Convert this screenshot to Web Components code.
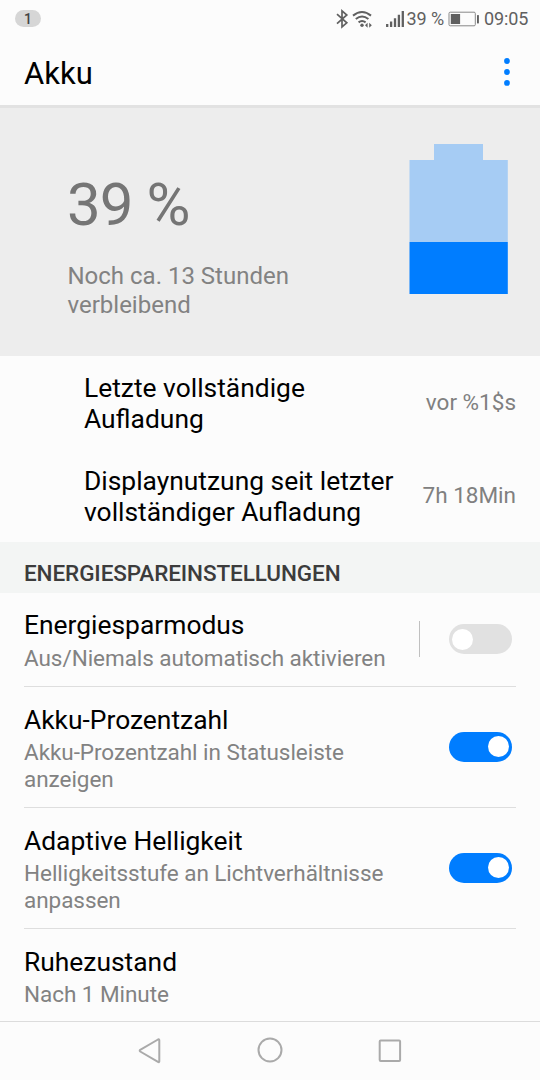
<!DOCTYPE html>
<html lang="de">
<head>
<meta charset="UTF-8">
<title>Akku</title>
<style>
  body {
    margin: 0;
    width: 540px;
    height: 1080px;
    overflow: hidden;
    background: #fcfcfc;
    font-family: Roboto, "Noto Sans", sans-serif;
    color: #000;
  }
</style>
</head>
<body>
<battery-screen></battery-screen>

<script>
// Status bar
class StatusBar extends HTMLElement {
  constructor() {
    super();
    this.attachShadow({ mode: 'open' });
    this.shadowRoot.innerHTML = `
      <style>
        :host {
          display: flex;
          align-items: center;
          box-sizing: border-box;
          height: 37px;
          padding: 0 12px 0 15px;
          font-size: 18px;
          line-height: 21px;
          color: #606060;
        }
        .badge {
          width: 26px;
          height: 17px;
          border-radius: 9px;
          background: #d6d6d6;
          color: #444;
          font-size: 14px;
          font-weight: 500;
          line-height: 18px;
          text-align: center;
          margin-right: auto;
        }
        svg {
          display: block;
          flex: none;
        }
        .percent {
          width: 41.5px;
          letter-spacing: -.1px;
          white-space: nowrap;
        }
        .time {
          width: 44px;
          letter-spacing: -.1px;
          white-space: nowrap;
        }
      </style>
      <span class="badge">1</span>
      <svg width="87" height="24" viewBox="0 0 87 24" fill="none" stroke="#606060" stroke-width="1.7">
        <path d="M17 7.2 L26.8 15.8 L22 20 V3.8 L26.8 8 L17 16.6"/>
        <path d="M33 8.6 Q42 1.4 51 8.6 M35.8 12 Q42 7 48.4 12 M38.6 15.4 Q42 12.8 45.6 15.4" stroke-width="2"/>
        <circle cx="42" cy="18.2" r="1.7" fill="#606060" stroke="none"/>
        <path d="M47.6 15.8 v5 l-2.6 -2.5z M49.2 15.8 v5 l2.6 -2.5z" fill="#606060" stroke="none"/>
        <path d="M67.2 17 V20 M71.1 14.5 V20 M75 11.3 V20 M78.9 7.8 V20 M82.8 4 V20" stroke-width="2.3"/>
      </svg>
      <span class="percent">39 %</span>
      <svg width="36" height="24" viewBox="0 0 36 24">
        <rect x="1" y="5.2" width="26.3" height="13.6" rx="1.2" fill="none" stroke="#888"/>
        <rect x="2.8" y="7" width="9.3" height="10" fill="#606060"/>
        <rect x="29" y="8" width="1.9" height="8.4" rx=".6" fill="#606060"/>
      </svg>
      <span class="time">09:05</span>
    `;
  }
}

// Title bar with overflow menu
class AppBar extends HTMLElement {
  constructor() {
    super();
    this.attachShadow({ mode: 'open' });
    this.shadowRoot.innerHTML = `
      <style>
        :host {
          display: flex;
          align-items: center;
          justify-content: space-between;
          box-sizing: border-box;
          height: 71px;
          padding: 0 24px;
          border-bottom: 3px solid #e2e2e2;
        }
        h1 {
          margin: 5px 0 0;
          font-size: 31px;
          line-height: 36px;
          font-weight: 400;
        }
        svg {
          display: block;
          margin-top: 2px;
        }
      </style>
      <h1><slot></slot></h1>
      <svg width="18" height="32" viewBox="0 0 18 32" fill="#007dff">
        <circle cx="9" cy="5" r="2.9"/>
        <circle cx="9" cy="16" r="2.9"/>
        <circle cx="9" cy="26.9" r="2.9"/>
      </svg>
    `;
  }
}

// Large charge level with remaining time
class BatterySummary extends HTMLElement {
  constructor() {
    super();
    this.attachShadow({ mode: 'open' });
    this.shadowRoot.innerHTML = `
      <style>
        :host {
          display: flex;
          justify-content: space-between;
          box-sizing: border-box;
          height: 247.5px;
          padding: 36px 32px 0 68px;
          background: #ededed;
          color: #757575;
        }
        .level {
          margin: 26px 0 0 -1px;
          font-size: 60px;
          line-height: 70px;
          letter-spacing: -.9px;
        }
        .remaining {
          width: 250px;
          margin: 22px 0 0 -.5px;
          font-size: 24px;
          line-height: 28.6px;
          color: #828282;
        }
        svg {
          display: block;
        }
      </style>
      <div>
        <div class="level"></div>
        <div class="remaining"><slot></slot></div>
      </div>
      <svg width="99" height="150" viewBox="0 0 99 150">
        <path d="M25 0 H74 V16 H98.8 V98 H.5 V16 H25z" fill="#a6ccf4"/>
        <rect x=".5" y="98" width="98.3" height="52" fill="#007dff"/>
      </svg>
    `;
  }

  connectedCallback() {
    this.shadowRoot.querySelector('.level').textContent = this.getAttribute('level');
  }
}

// Label and value pair
class UsageRow extends HTMLElement {
  constructor() {
    super();
    this.attachShadow({ mode: 'open' });
    this.shadowRoot.innerHTML = `
      <style>
        :host {
          display: flex;
          align-items: center;
          justify-content: space-between;
          box-sizing: border-box;
          height: 93px;
          padding: 3px 24px 0 84px;
        }
        .label {
          max-width: 320px;
          font-size: 26.4px;
          line-height: 31px;
        }
        .value {
          margin-bottom: 3px;
          font-size: 22.5px;
          color: #808080;
          white-space: nowrap;
        }
      </style>
      <div class="label"><slot></slot></div>
      <div class="value"></div>
    `;
  }

  connectedCallback() {
    this.shadowRoot.querySelector('.value').textContent = this.getAttribute('value');
  }
}

class SectionHeader extends HTMLElement {
  constructor() {
    super();
    this.attachShadow({ mode: 'open' });
    this.shadowRoot.innerHTML = `
      <style>
        :host {
          display: flex;
          align-items: center;
          box-sizing: border-box;
          height: 51px;
          padding: 11px 24px 0;
          background: #f3f5f4;
          color: #3c3c3c;
          font-size: 22.5px;
          font-weight: 500;
          letter-spacing: -.1px;
        }
      </style>
      <slot></slot>
    `;
  }
}

class ToggleSwitch extends HTMLElement {
  constructor() {
    super();
    this.attachShadow({ mode: 'open' });
    this.shadowRoot.innerHTML = `
      <style>
        :host {
          display: flex;
          align-items: center;
          box-sizing: border-box;
          width: 63px;
          height: 30px;
          padding: 0 3px;
          border-radius: 15px;
          background: #e1e1e1;
        }
        :host([on]) {
          justify-content: flex-end;
          background: #007dff;
        }
        .thumb {
          width: 21px;
          height: 21px;
          border-radius: 50%;
          background: #fff;
        }
      </style>
      <div class="thumb"></div>
    `;
  }
}

// Settings entry, control goes in the slot
class SettingRow extends HTMLElement {
  constructor() {
    super();
    this.attachShadow({ mode: 'open' });
    this.shadowRoot.innerHTML = `
      <style>
        :host {
          display: flex;
          align-items: center;
          justify-content: space-between;
          box-sizing: border-box;
          margin: 0 24px;
          padding: 17.5px 4.5px 14.5px 0;
          border-bottom: 1px solid #dedede;
        }
        :host([last]) {
          border-bottom: 0;
        }
        .text {
          width: 375px;
        }
        .title {
          font-size: 26.4px;
          line-height: 31px;
        }
        .summary {
          margin-top: 3.5px;
          padding-bottom: .5px;
          font-size: 22.5px;
          line-height: 26.5px;
          letter-spacing: -.05px;
          color: #828282;
        }
        .control {
          display: flex;
          align-items: center;
          margin-bottom: 3.4px;
        }
        :host([divided]) .control::before {
          content: "";
          width: 1.5px;
          height: 36px;
          margin-right: 28.5px;
          background: #c0c0c0;
        }
      </style>
      <div class="text">
        <div class="title"></div>
        <div class="summary"></div>
      </div>
      <div class="control"><slot></slot></div>
    `;
  }

  connectedCallback() {
    this.shadowRoot.querySelector('.title').textContent = this.getAttribute('label');
    this.shadowRoot.querySelector('.summary').textContent = this.getAttribute('summary');
  }
}

// System navigation: back, home, recents
class NavigationBar extends HTMLElement {
  constructor() {
    super();
    this.attachShadow({ mode: 'open' });
    this.shadowRoot.innerHTML = `
      <style>
        :host {
          display: flex;
          justify-content: center;
          gap: 90px;
          box-sizing: border-box;
          height: 59px;
          padding-top: 14px;
          border-top: 1px solid #dcdcdc;
          background: #fcfcfc;
        }
        svg {
          display: block;
          fill: none;
          stroke: #aaa;
          stroke-width: 2;
          stroke-linejoin: round;
        }
      </style>
      <svg width="30" height="30" viewBox="0 0 30 30"><path d="M24.3 4.2 V25.2 Q24.3 26.6 23 25.9 L5.2 15.5 Q4.2 14.7 5.2 13.9 L23 3.5 Q24.3 2.8 24.3 4.2z"/></svg>
      <svg width="30" height="30" viewBox="0 0 30 30"><circle cx="15" cy="14" r="11.5"/></svg>
      <svg width="30" height="30" viewBox="0 0 30 30"><rect x="4.7" y="4.5" width="20.4" height="20.6" rx="1"/></svg>
    `;
  }
}

class BatteryScreen extends HTMLElement {
  constructor() {
    super();
    this.attachShadow({ mode: 'open' });
    this.shadowRoot.innerHTML = `
      <style>
        :host {
          display: flex;
          flex-direction: column;
          height: 1080px;
        }
        main {
          flex: 1;
          min-height: 0;
          overflow: hidden;
        }
      </style>
      <status-bar></status-bar>
      <app-bar>Akku</app-bar>
      <main>
        <battery-summary level="39 %">Noch ca. 13 Stunden verbleibend</battery-summary>
        <usage-row value="vor %1$s">Letzte vollständige Aufladung</usage-row>
        <usage-row value="7h 18Min">Displaynutzung seit letzter vollständiger Aufladung</usage-row>
        <section-header>ENERGIESPAREINSTELLUNGEN</section-header>
        <setting-row divided label="Energiesparmodus" summary="Aus/Niemals automatisch aktivieren">
          <toggle-switch></toggle-switch>
        </setting-row>
        <setting-row label="Akku-Prozentzahl" summary="Akku-Prozentzahl in Statusleiste anzeigen">
          <toggle-switch on></toggle-switch>
        </setting-row>
        <setting-row label="Adaptive Helligkeit" summary="Helligkeitsstufe an Lichtverhältnisse anpassen">
          <toggle-switch on></toggle-switch>
        </setting-row>
        <setting-row last label="Ruhezustand" summary="Nach 1 Minute"></setting-row>
      </main>
      <navigation-bar></navigation-bar>
    `;
  }
}

customElements.define('status-bar', StatusBar);
customElements.define('app-bar', AppBar);
customElements.define('battery-summary', BatterySummary);
customElements.define('usage-row', UsageRow);
customElements.define('section-header', SectionHeader);
customElements.define('toggle-switch', ToggleSwitch);
customElements.define('setting-row', SettingRow);
customElements.define('navigation-bar', NavigationBar);
customElements.define('battery-screen', BatteryScreen);
</script>
</body>
</html>
